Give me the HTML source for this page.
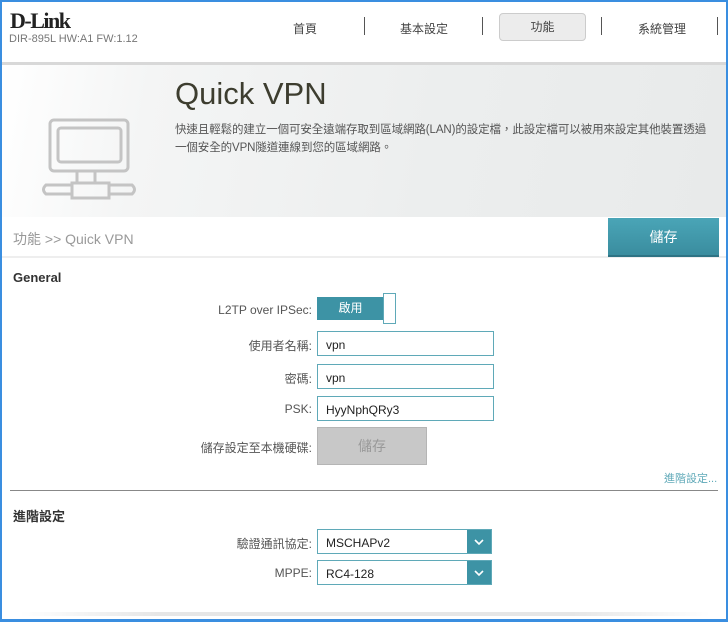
<!DOCTYPE html>
<html><head><meta charset="utf-8"><style>
*{box-sizing:border-box;margin:0;padding:0}
body{width:728px;height:622px;overflow:hidden;font-family:"Liberation Sans","Noto Sans CJK TC",sans-serif;background:#fff;position:relative}
.frame{position:absolute;inset:0;border:2px solid #3a8ee0;border-bottom-width:3px;pointer-events:none;z-index:9}
.abs{position:absolute}
.lbl{position:absolute;font-size:12px;color:#555;text-align:right;width:200px;left:112px}
.inp{position:absolute;left:317px;width:177px;height:25px;border:1px solid #5fa9b8;font-size:12px;color:#222;padding:6px 8px}
.sel{position:absolute;left:317px;width:175px;height:25px;border:1px solid #5fa9b8;font-size:12px;color:#222;padding:6px 8px}
.sel .ar{position:absolute;right:0;top:0;width:24px;height:23px;background:#3d93a5}
</style></head><body>
<div class="frame"></div>
<!-- header -->
<div class="abs" style="left:10px;top:8px;font-family:'Liberation Serif',serif;font-weight:bold;font-size:22px;color:#222;letter-spacing:-1.5px">D-Link</div>
<div class="abs" style="left:9px;top:33px;font-size:11px;color:#777">DIR-895L HW:A1 FW:1.12</div>
<div class="abs" style="left:293px;top:20px;font-size:12px;color:#444">首頁</div>
<div class="abs" style="left:364px;top:17px;width:1px;height:18px;background:#555"></div>
<div class="abs" style="left:400px;top:20px;font-size:12px;color:#444">基本設定</div>
<div class="abs" style="left:482px;top:17px;width:1px;height:18px;background:#555"></div>
<div class="abs" style="left:499px;top:13px;width:87px;height:28px;background:#ececec;border:1px solid #ccc;border-radius:4px;font-size:12px;color:#444;text-align:center;line-height:26px">功能</div>
<div class="abs" style="left:601px;top:17px;width:1px;height:18px;background:#555"></div>
<div class="abs" style="left:638px;top:20px;font-size:12px;color:#444">系統管理</div>
<div class="abs" style="left:717px;top:17px;width:1px;height:18px;background:#555"></div>
<!-- hero -->
<div class="abs" style="left:2px;top:62px;width:724px;height:155px;background:linear-gradient(100deg,#ffffff 0%,#f4f5f5 20%,#eceeee 60%,#e8eaea 100%);border-top:3px solid #d8d8d8"></div>
<div class="abs" style="left:175px;top:76px;font-size:31px;color:#3d3d2f">Quick VPN</div>
<div class="abs" style="left:175px;top:121px;white-space:nowrap;font-size:11.5px;letter-spacing:-0.1px;line-height:18px;color:#555">快速且輕鬆的建立一個可安全遠端存取到區域網路(LAN)的設定檔，此設定檔可以被用來設定其他裝置透過<br>一個安全的VPN隧道連線到您的區域網路。</div>
<svg class="abs" style="left:0;top:0" width="160" height="217">
<g fill="none" stroke="#c4c4c4" stroke-width="3">
<rect x="50" y="120" width="78" height="51" rx="4"/><rect x="58" y="128" width="63" height="34" rx="3"/>
<path d="M77 171 V183 M95 171 V183"/>
<rect x="72" y="183" width="37" height="15"/>
<path d="M72 185 H46 Q41 189.5 46 194 H72"/>
<path d="M109 185 H132 Q137 189.5 132 194 H109"/>
</g></svg>
<!-- breadcrumb -->
<div class="abs" style="left:2px;top:217px;width:724px;height:41px;background:#fff;border-bottom:2px solid #eee"></div>
<div class="abs" style="left:13px;top:229px;font-size:14px;color:#999">功能 &gt;&gt; Quick VPN</div>
<div class="abs" style="left:608px;top:218px;width:111px;height:39px;background:linear-gradient(#4aa5b7,#3a8d9f);border-bottom:2px solid #2e7384;color:#fff;font-size:14px;text-align:center;line-height:38px">儲存</div>
<!-- general -->
<div class="abs" style="left:13px;top:270px;font-size:13px;font-weight:bold;color:#333">General</div>
<div class="lbl" style="top:303px">L2TP over IPSec:</div>
<div class="abs" style="left:317px;top:297px;width:67px;height:23px;background:#3d93a5;color:#fff;font-size:12px;text-align:center;line-height:23px">啟用</div>
<div class="abs" style="left:383px;top:293px;width:13px;height:31px;border:1px solid #5fa9b8;background:#fff"></div>
<div class="lbl" style="top:337px">使用者名稱:</div>
<div class="inp" style="top:331px">vpn</div>
<div class="lbl" style="top:370px">密碼:</div>
<div class="inp" style="top:364px">vpn</div>
<div class="lbl" style="top:402px">PSK:</div>
<div class="inp" style="top:396px">HyyNphQRy3</div>
<div class="lbl" style="top:439px">儲存設定至本機硬碟:</div>
<div class="abs" style="left:317px;top:427px;width:110px;height:38px;background:#c8c8c8;border:1px solid #b5b5b5;color:#999;font-size:14px;text-align:center;line-height:36px">儲存</div>
<div class="abs" style="left:664px;top:470px;font-size:11px;color:#5fa9b8">進階設定...</div>
<div class="abs" style="left:10px;top:490px;width:708px;height:1px;background:#888"></div>
<div class="abs" style="left:13px;top:506px;font-size:13px;font-weight:bold;color:#333">進階設定</div>
<div class="lbl" style="top:535px">驗證通訊協定:</div>
<div class="sel" style="top:529px">MSCHAPv2<div class="ar"><svg width="24" height="23"><path d="M8 10l4 4 4-4" fill="none" stroke="#fff" stroke-width="1.6"/></svg></div></div>
<div class="lbl" style="top:566px">MPPE:</div>
<div class="sel" style="top:560px">RC4-128<div class="ar"><svg width="24" height="23"><path d="M8 10l4 4 4-4" fill="none" stroke="#fff" stroke-width="1.6"/></svg></div></div>
<div class="abs" style="left:20px;top:612px;width:690px;height:4px;background:linear-gradient(90deg,#fff,#e6e6e6 20%,#e6e6e6 80%,#fff)"></div>
</body></html>
